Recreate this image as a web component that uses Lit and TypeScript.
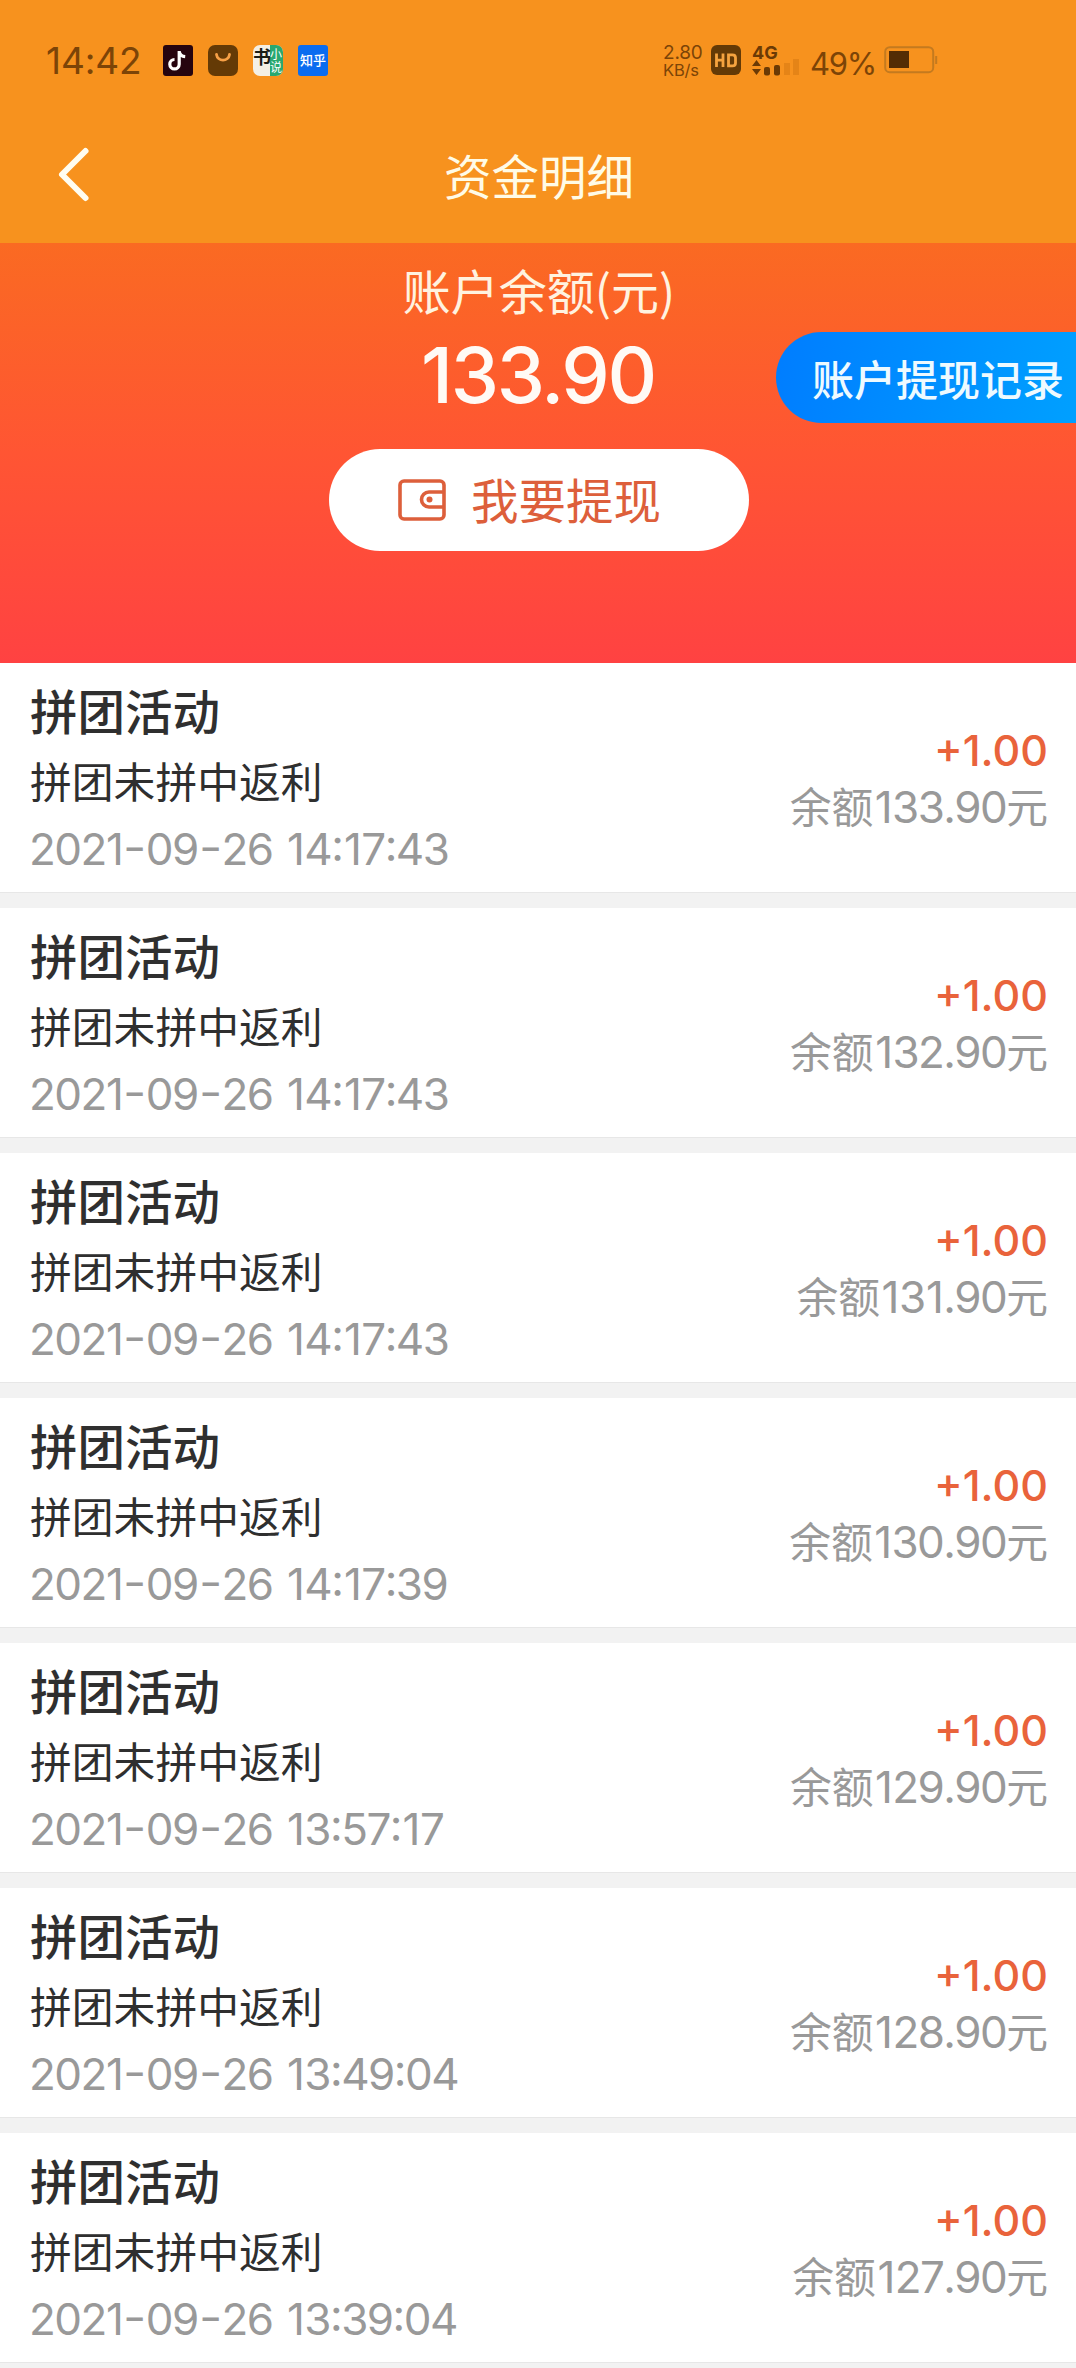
import { LitElement, html, css, svg } from "lit";
import { customElement, property } from "lit/decorators.js";

interface Entry {
  time: string;
  balance: string;
}

const ENTRIES: Entry[] = [
  { time: "2021-09-26 14:17:43", balance: "133.90" },
  { time: "2021-09-26 14:17:43", balance: "132.90" },
  { time: "2021-09-26 14:17:43", balance: "131.90" },
  { time: "2021-09-26 14:17:39", balance: "130.90" },
  { time: "2021-09-26 13:57:17", balance: "129.90" },
  { time: "2021-09-26 13:49:04", balance: "128.90" },
  { time: "2021-09-26 13:39:04", balance: "127.90" },
];

/** Gives the narrow digit 1 a little more room on both sides. */
const spaced = (text: string) =>
  text.split(/(1)/).filter(Boolean).map((part) => (part === "1" ? html`<span class="one">1</span>` : part));

@customElement("status-bar")
export class StatusBar extends LitElement {
  static styles = css`
    :host { display: flex; height: 76px; padding: 22px 138px 0 46px; box-sizing: content-box; justify-content: space-between; color: #7c4407; font-family: Inter, "Noto Sans CJK SC", sans-serif; }
    .side { display: flex; align-items: center; height: 76px; }
    .clock { width: 117px; font-size: 37px; line-height: 76px; padding-top: 2px; letter-spacing: -0.1px; white-space: nowrap; }
    .apps { display: flex; gap: 15px; }
    svg { display: block; flex: none; overflow: visible; }
    .rate { width: 48px; font-size: 19px; line-height: 17px; padding-top: 3px; white-space: nowrap; letter-spacing: -0.2px; }
    .rate .unit { font-size: 16.5px; line-height: 18px; }
    .hd { margin-right: 11px; }
    .cell { margin-right: 10px; }
    .percent { width: 74px; font-size: 31px; line-height: 76px; padding-top: 7px; box-sizing: border-box; white-space: nowrap; letter-spacing: -1.2px; }
  `;
  render() {
    return html`
      <div class="side">
        <div class="clock">14:42</div>
        <div class="apps">
          ${svg`<svg width="30" height="31" viewBox="0 0 30 31"><rect width="30" height="31" rx="3" fill="#26040f"/><path d="M16.200 6v13.200a4.700 4.700 0 1 1-4.700-4.700M16.200 6.600c.6 3 2.600 4.800 6 5.100" fill="none" stroke="#fff" stroke-width="3.200"/></svg>`}
          ${svg`<svg width="30" height="31" viewBox="0 0 30 31"><rect width="30" height="31" rx="7" fill="#643a06"/><path d="M8.500 9.500c1 7.500 12 7.500 13 0" fill="none" stroke="#f7a046" stroke-width="2.800" stroke-linecap="round"/></svg>`}
          ${svg`<svg width="30" height="31" viewBox="0 0 30 31"><rect width="30" height="31" rx="7" fill="#f4efe4"/><path d="M17 0h6a7 7 0 0 1 7 7v17a7 7 0 0 1-7 7h-6z" fill="#2aa870"/><text x="0" y="19" font-size="18" font-weight="700" fill="#1c1c14" font-family="Noto Sans CJK SC">书</text><text x="17" y="14" font-size="12" fill="#fff" font-family="Noto Sans CJK SC">小</text><text x="17" y="27" font-size="12" fill="#fff" font-family="Noto Sans CJK SC">说</text></svg>`}
          ${svg`<svg width="30" height="31" viewBox="0 0 30 31"><rect width="30" height="31" rx="3" fill="#0a6cf0"/><text x="2" y="20" font-size="13" fill="#fff" font-weight="500" font-family="Noto Sans CJK SC">知乎</text></svg>`}
        </div>
      </div>
      <div class="side">
        <div class="rate"><div>2.80</div><div class="unit">KB/s</div></div>
        <svg class="hd" width="30" height="30" viewBox="0 0 30 30"><rect width="30" height="30" rx="6" fill="#643a06"/><path d="M5.500 8.500v13.500M12 8.500v13.500M5.500 15.200h6.500M17.500 9.800h4q3 0 3 3v5.100q0 3-3 3h-4z" fill="none" stroke="#f5a33f" stroke-width="2.800"/></svg>
        <svg class="cell" width="48" height="32" viewBox="0 0 48 32"><text x="0" y="14.500" font-size="18" font-weight="700" fill="#6b3a05" font-family="Inter">4G</text><path d="M0 22l4.500-6 4.500 6zM0 25l4.500 6 4.500-6z" fill="#6b3a05"/><rect x="12" y="23" width="6" height="8.500" rx="2" fill="#6b3a05"/><rect x="22" y="21" width="6" height="10.500" rx="2" fill="#6b3a05"/><rect x="32" y="19" width="6" height="12" fill="#e58417"/><rect x="41" y="15" width="6" height="16" fill="#e58417"/></svg>
        <div class="percent">49%</div>
        <svg width="54" height="28" viewBox="0 0 54 28"><rect x="1.200" y="1.200" width="48" height="25" rx="4.500" fill="none" stroke="#c47a1f" stroke-width="2"/><rect x="5" y="5" width="20" height="17" fill="#542c04"/><path d="M52.200 10v8" stroke="#c47a1f" stroke-width="2"/></svg>
      </div>
    `;
  }
}

@customElement("entry-row")
export class EntryRow extends LitElement {
  @property({ attribute: false }) entry!: Entry;
  static styles = css`
    :host { display: flex; justify-content: space-between; height: 230px; padding: 0 28px 0 30px; box-sizing: border-box; background: #fff; border-bottom: 1px solid #e7e7e7; font-family: "Noto Sans CJK SC", sans-serif; white-space: nowrap; }
    .kind { margin-top: 12px; height: 70px; line-height: 70px; font-size: 47.5px; font-weight: 500; color: #2f2f2f; }
    .note { height: 70px; line-height: 70px; font-size: 41.8px; color: #2f2f2f; }
    .time { margin-left: -1px; font: 400 44px/68px Inter, sans-serif; letter-spacing: -1.5px; word-spacing: 2px; font-kerning: none; font-feature-settings: "case"; color: #999; }
    .dash { display: inline-block; width: 23.5px; text-align: center; transform: scaleX(1.15); }
    .one { padding: 0 1px 0 1.5px; }
    .right { text-align: right; padding-top: 59px; }
    .amount { font: 550 43px/56px Inter, sans-serif; font-feature-settings: "case"; color: #e9633b; letter-spacing: 0; }
    .balance { font-size: 41.8px; line-height: 58px; margin-top: -2px; color: #999; }
    .digits { font-family: Inter, sans-serif; font-size: 44px; letter-spacing: -1.6px; font-kerning: none; }
  `;
  render() {
    const [date, clock] = this.entry.time.split(" ");
    const [year, month, day] = date.split("-");
    const dash = html`<span class="dash">-</span>`;
    return html`
      <div>
        <div class="kind">拼团活动</div>
        <div class="note">拼团未拼中返利</div>
        <div class="time">${year}${dash}${month}${dash}${day} ${spaced(clock)}</div>
      </div>
      <div class="right">
        <div class="amount">+1.00</div>
        <div class="balance">余额<span class="digits">${spaced(this.entry.balance)}</span>元</div>
      </div>
    `;
  }
}

@customElement("app-root")
export class AppRoot extends LitElement {
  static styles = css`
    :host { display: block; width: 1076px; height: 2368px; overflow: hidden; background: #f2f2f2; font-family: "Noto Sans CJK SC", sans-serif; white-space: nowrap; }
    .top { height: 243px; background: #f7921e; color: #fffbe6; }
    .nav { display: grid; grid-template-columns: 122px 1fr 120px; align-items: center; height: 145px; }
    .back { display: block; margin-left: 56px; margin-top: 8px; }
    .title { text-align: center; font-size: 47.5px; line-height: 70px; margin-top: 8px; }
    .hero { position: relative; height: 420px; background: linear-gradient(#fa6a22, #ff5533 50%, #ff4242); display: flex; flex-direction: column; align-items: center; color: #fff; padding-left: 2px; box-sizing: border-box; }
    .label { font-size: 48px; line-height: 70px; margin-top: 11px; color: #fff3e0; }
    .sum { font: 550 77px/96px Inter, sans-serif; letter-spacing: -2.3px; margin-top: 3px; padding-right: 2px; color: #fffaf5; }
    .withdraw { display: flex; align-items: center; width: 420px; height: 102px; margin-top: 26px; border-radius: 52px; background: #fff; color: #dd5f3b; box-sizing: border-box; padding-left: 69px; gap: 25px; font-size: 47.5px; }
    .withdraw span { margin-top: -3px; }
    .records { position: absolute; right: 0; top: 89px; width: 300px; height: 91px; border-radius: 46px 0 0 46px; background: linear-gradient(100deg, #007dff, #00a0ff); box-sizing: border-box; padding-left: 36px; font-size: 42px; line-height: 91px; font-weight: 500; color: #eefaff; }
    .list { display: grid; row-gap: 15px; }
  `;
  render() {
    return html`
      <div class="top">
        <status-bar></status-bar>
        <div class="nav">
          <svg class="back" width="36" height="60" viewBox="0 0 36 60"><path d="M29.500 6L6 29.500L29.500 53" fill="none" stroke="#fffdf0" stroke-width="6" stroke-linecap="round" stroke-linejoin="round"/></svg>
          <div class="title">资金明细</div>
        </div>
      </div>
      <div class="hero">
        <div class="label">账户余额(元)</div>
        <div class="sum">133.90</div>
        <div class="withdraw">
          <svg width="48" height="42" viewBox="0 0 48 42"><rect x="2" y="2" width="44" height="38" rx="4" fill="none" stroke="currentColor" stroke-width="3.600"/><path d="M46 13H31a7.500 7.500 0 0 0 0 15H46" fill="none" stroke="currentColor" stroke-width="3.600"/><circle cx="31.500" cy="20.500" r="3" fill="currentColor"/></svg>
          <span>我要提现</span>
        </div>
        <div class="records">账户提现记录</div>
      </div>
      <div class="list">${ENTRIES.map((e) => html`<entry-row .entry=${e}></entry-row>`)}</div>
    `;
  }
}
